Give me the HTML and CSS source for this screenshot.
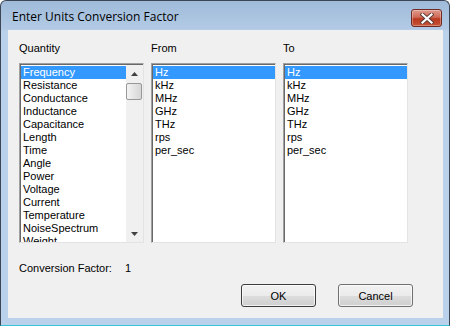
FILE: index.html
```html
<!DOCTYPE html>
<html lang="en">
  <head>
    <meta charset="UTF-8" />
    <title>Enter Units Conversion Factor</title>
    <link rel="stylesheet" href="styles.css">
  </head>
  <body>
    <div class="window">
      <div class="titlebar">
        <span class="title">Enter Units Conversion Factor</span>
        <button class="close" title="Close">
          <svg width="14" height="11" viewBox="0 0 14 11">
            <path d="M2.5 1.5 L11.5 9.5 M11.5 1.5 L2.5 9.5" stroke="#5a3a36" stroke-width="4" stroke-linecap="square" />
            <path d="M2.5 1.5 L11.5 9.5 M11.5 1.5 L2.5 9.5" stroke="#fff" stroke-width="2.2" stroke-linecap="square" />
          </svg>
        </button>
      </div>

      <div class="client">
        <div class="columns">
          <label>Quantity</label>
          <label>From</label>
          <label>To</label>

          <div class="listbox">
            <ul class="items">
              <li class="selected">Frequency</li>
              <li>Resistance</li>
              <li>Conductance</li>
              <li>Inductance</li>
              <li>Capacitance</li>
              <li>Length</li>
              <li>Time</li>
              <li>Angle</li>
              <li>Power</li>
              <li>Voltage</li>
              <li>Current</li>
              <li>Temperature</li>
              <li>NoiseSpectrum</li>
              <li>Weight</li>
            </ul>
            <div class="scrollbar">
              <div class="sb-btn">
                <svg width="7" height="4" viewBox="0 0 7 4"><path d="M3.5 0 L7 4 L0 4 Z" fill="#404040" /></svg>
              </div>
              <div class="sb-thumb"></div>
              <div class="sb-track"></div>
              <div class="sb-btn">
                <svg width="7" height="4" viewBox="0 0 7 4"><path d="M0 0 L7 0 L3.5 4 Z" fill="#404040" /></svg>
              </div>
            </div>
          </div>

          <div class="listbox">
            <ul class="items">
              <li class="selected">Hz</li>
              <li>kHz</li>
              <li>MHz</li>
              <li>GHz</li>
              <li>THz</li>
              <li>rps</li>
              <li>per_sec</li>
            </ul>
          </div>

          <div class="listbox">
            <ul class="items">
              <li class="selected">Hz</li>
              <li>kHz</li>
              <li>MHz</li>
              <li>GHz</li>
              <li>THz</li>
              <li>rps</li>
              <li>per_sec</li>
            </ul>
          </div>
        </div>

        <div class="factor">
          <span>Conversion Factor:</span>
          <span class="factor-value">1</span>
        </div>

        <div class="buttons">
          <button class="btn default">OK</button>
          <button class="btn">Cancel</button>
        </div>
      </div>
    </div>
  </body>
</html>
```

FILE: styles.css
```css
body {
  margin: 0;
  padding: 0;
  background-color: #fff;
  font-family: "Liberation Sans", Arial, sans-serif;
  font-size: 11px;
  color: #000;
}

.window {
  width: 450px;
  height: 326px;
  box-sizing: border-box;
  border: 1px solid #3c4654;
  border-bottom-color: #34c5d6;
  border-radius: 6px 6px 0 0;
  background: linear-gradient(#9fbbd9 0px, #b2cae5 28px, #b9d1ea 30px);
  padding: 0 6px 7px 7px;
  display: flex;
  flex-direction: column;
}

.titlebar {
  height: 29px;
  display: flex;
  align-items: flex-start;
  justify-content: space-between;
}

.title {
  font-family: "Open Sans", "Liberation Sans", sans-serif;
  font-size: 12px;
  margin: 9px 0 0 4px;
  line-height: 14px;
  color: #000;
}

.close {
  width: 31px;
  height: 18px;
  margin: 8px 1px 0 0;
  padding: 0;
  border: 1px solid #6d2a22;
  border-radius: 3px;
  background: linear-gradient(#e09a8c 0%, #cf6a56 45%, #b9391f 55%, #c75437 100%);
  box-shadow: inset 0 0 0 1px rgba(255, 255, 255, 0.3);
  display: flex;
  align-items: center;
  justify-content: center;
}

.client {
  flex: 1;
  background-color: #f0f0f0;
  padding: 12px 0 0 11px;
  display: flex;
  flex-direction: column;
}

.columns {
  display: grid;
  grid-template-columns: 125px 125px 125px;
  grid-template-rows: 13px 180px;
  column-gap: 7px;
  row-gap: 8px;
}

label {
  line-height: 13px;
}

.listbox {
  box-sizing: border-box;
  border: 1px solid;
  border-color: #a0a0a0 #e3e3e3 #e3e3e3 #a0a0a0;
  background-color: #fff;
  display: flex;
  overflow: hidden;
}

.items {
  flex: 1;
  list-style: none;
  margin: 0;
  padding: 1px 0 0 0;
  border-top: 1px solid #696969;
  border-left: 1px solid #696969;
  overflow: hidden;
}

.items li {
  height: 13px;
  line-height: 13px;
  padding-left: 2px;
  white-space: nowrap;
}

.items li.selected {
  background-color: #3399ff;
  color: #fff;
}

.scrollbar {
  width: 17px;
  border-top: 1px solid #696969;
  display: flex;
  flex-direction: column;
  background-color: #f0f0f0;
}

.sb-btn {
  height: 17px;
  display: flex;
  align-items: center;
  justify-content: center;
}

.sb-thumb {
  height: 15px;
  margin: 1px 1px 0 0;
  border: 1px solid #979797;
  border-radius: 2px;
  background: linear-gradient(90deg, #f3f3f3, #e4e4e4 50%, #d6d6d6);
}

.sb-track {
  flex: 1;
}

.factor {
  margin-top: 19px;
  line-height: 13px;
  display: flex;
}

.factor-value {
  margin-left: 13px;
}

.buttons {
  display: flex;
  justify-content: flex-end;
  gap: 22px;
  margin: 9px 30px 0 0;
}

.btn {
  width: 75px;
  height: 23px;
  font-family: "Liberation Sans", Arial, sans-serif;
  font-size: 11px;
  color: #000;
  border: 1px solid #707070;
  border-radius: 3px;
  background: linear-gradient(#f2f2f2 0%, #ebebeb 50%, #dddddd 51%, #cfcfcf 100%);
  box-shadow: inset 0 0 0 1px rgba(255, 255, 255, 0.7);
  padding: 0;
}

.btn.default {
  border-color: #3c3c3c;
}
```
